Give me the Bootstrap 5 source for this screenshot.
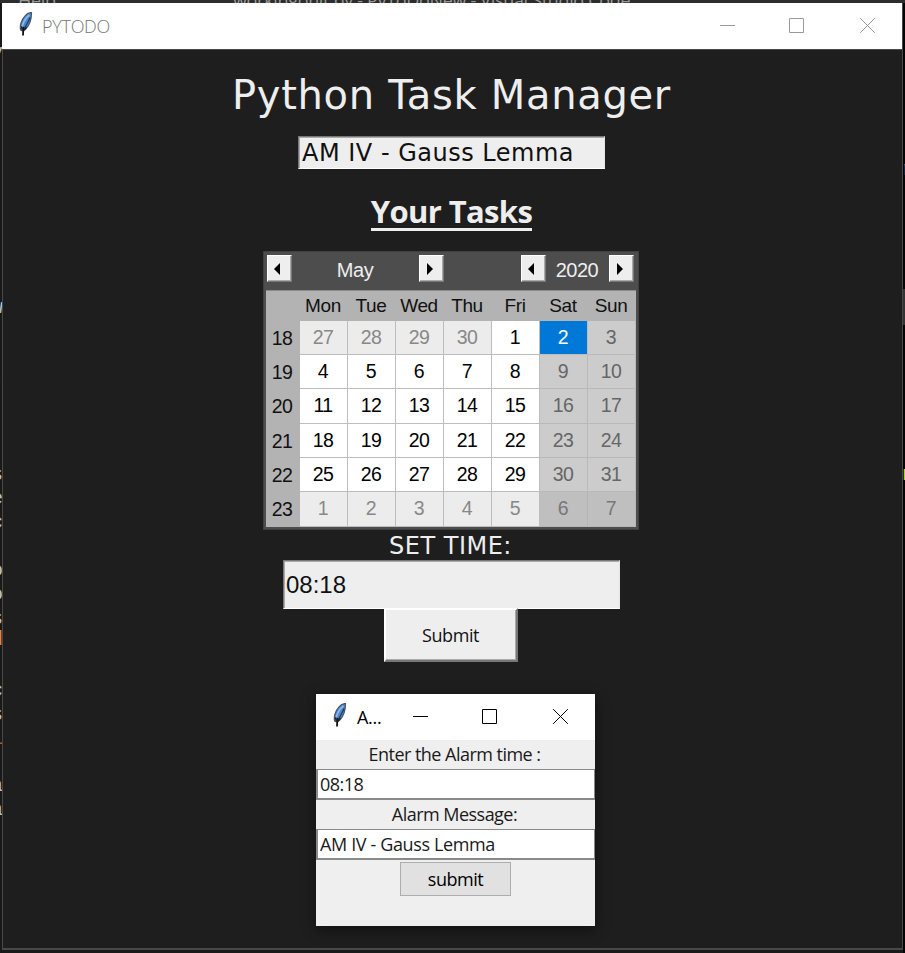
<!DOCTYPE html>
<html lang="en">
<head>
<meta charset="utf-8">
<meta name="viewport" content="width=device-width, initial-scale=1">
<title>PYTODO</title>
<link href="https://cdn.jsdelivr.net/npm/bootstrap@5.3.0/dist/css/bootstrap.min.css" rel="stylesheet">
<style>
  body { width: 905px; height: 953px; background: #1a1a1a; font-family: "Open Sans", sans-serif; color: #111; line-height: 1; }
  .desk-top { left: 0; top: 0; width: 905px; height: 3px; background: #2d2d2d; color: #999; font-size: 18px; white-space: nowrap; }
  .desk-top span { position: absolute; top: -9px; line-height: 18px; letter-spacing: -.33px; }
  .desk-left { left: 0; top: 0; width: 2px; height: 953px; background: #191919; color: #b5c4cf; font: 20px/24px "Liberation Mono", monospace; }
  .desk-left i { position: absolute; right: 0; font-style: normal; }
  .desk-right { right: 0; top: 0; width: 2px; height: 953px; background: #050505; font: 20px/24px "Liberation Mono", monospace; }
  .desk-right i { position: absolute; left: -1px; font-style: normal; }
  .desk-right .thumb-bar { left: 0; top: 289px; width: 3px; height: 36px; background: #333; }
  .main-win { margin: 3px 0 0 2px; width: 901px; height: 947px; background: #1e1e1e; border: solid #484848; border-width: 0 1px 2px; }
  .titlebar { background: #fff; width: 100%; }
  .main-bar { width: 900px; height: 46px; margin-left: -1px; padding-left: 16px; color: #999; }
  .main-bar .bar-title { font-weight: 300; letter-spacing: -.28px; color: #777; }
  .bar-line { height: 1px; background: #484848; }
  .bar-title { font-size: 18px; }
  .wctls { gap: 54px; padding: 0 27px 2px 0; }
  .wctls svg:last-child { margin-left: 2px; }
  .wctl { width: 15px; height: 15px; display: block; fill: none; stroke: currentColor; stroke-width: 1; }
  .content { padding-right: 2px; }
  h1 { font: 40px/48px "DejaVu Sans", Verdana, sans-serif; letter-spacing: .7px; color: #eee; margin: 21px 0 0; }
  .sunk { background: #eee; border: 1px solid; border-color: #777 #e4e4e4 #fff #777; box-shadow: inset 1px 1px 0 #aaa; white-space: nowrap; }
  .task-entry { width: 307px; height: 33px; margin-top: 17px; padding-left: 3px; font: 24px/33px "DejaVu Sans", Verdana, sans-serif; letter-spacing: .5px; }
  h2 { font: 700 31px/34px "Open Sans", sans-serif; letter-spacing: -.63px; color: #eee; margin: 25px 0 0; border-bottom: 3px solid #eee; height: 37px; }
  .cal { width: 376px; height: 279px; margin: 20px 2px 0 0; background: #4d4d4d; padding: 0 3px 3px; font: 19.5px/1 "Liberation Sans", Arial, sans-serif; box-shadow: inset 1px 1px #404040, inset -1px -1px #404040; }
  .cal-head { height: 39px; padding: 4px 2px 0 1px; color: #eee; }
  .cal-head .lbl { line-height: 30px; text-align: center; letter-spacing: -.5px; font-size: 20px; }
  .arrow-btn { width: 25px; height: 27px; background: #eee; border: 1px solid; border-color: #fff #777 #777 #fff; box-shadow: inset -1px -1px #aaa; padding: 0 3px 0 0; display: flex; align-items: center; justify-content: center; }
  .cal-grid { display: grid; grid-template-columns: 34px repeat(7, 48px); grid-template-rows: 29.5px repeat(6, 34.4px); background: #b3b3b3; border-top: 1px solid #8c8c8c; height: 237px; text-align: center; }
  .cal-grid > div { border: solid #bdbdbd; border-width: 0 1.5px 1.5px 0; line-height: 33px; letter-spacing: -.5px; background: #fff; color: #000; }
  .cal-grid > .hd { background: none; border: 0; line-height: 29px; color: #111; font-size: 19px; letter-spacing: -.4px; padding-right: 1px; }
  .cal-grid > .wk { background: none; border: 0; line-height: 35px; color: #111; padding-right: 1px; }
  .cal-grid > .off { background: #ececec; color: #888; }
  .cal-grid > .we { background: #ccc; color: #666; border-color: #b9b9b9; }
  .cal-grid > .weoff { background: #bfbfbf; color: #777; border-color: #b5b5b5; }
  .cal-grid > .sel { background: #0078d7; color: #fff; }
  .set-time { font: 24px/32px "DejaVu Sans", Verdana, sans-serif; letter-spacing: .5px; color: #eee; height: 30px; margin-right: 2px; }
  .time-entry { width: 337px; height: 49px; padding-left: 2px; font: 24px/48px "Liberation Sans", Arial, sans-serif; }
  .submit-main { width: 134px; height: 54px; margin: -1px 2px 0 0; background: #eee; border: 2px solid; border-color: #fff #777 #777 #fff; box-shadow: inset -1px -1px #aaa; font: 18px/48px "Open Sans", sans-serif; letter-spacing: -.42px; padding: 0; color: #111; }
  .dlg { left: 316px; top: 694px; width: 279px; height: 232px; background: #efefef; box-shadow: 0 4px 14px rgba(0,0,0,.45); font-size: 18px; letter-spacing: -.53px; color: #1a1a1a; }
  .dlg-bar { height: 46px; padding-left: 16px; color: #000; }
  .dlg-bar .bar-title { margin-left: 9px; letter-spacing: -.3px; }
  .dlg-lbl { height: 29px; line-height: 28px; text-align: center; padding-right: 2px; }
  .dlg-in { height: 31px; line-height: 28px; background: #fff; border: 2px solid #8a8a8a; border-width: 1px 1px 2px 2px; padding-left: 2px; }
  .dlg-msg { letter-spacing: -.37px; }
  .dlg-btn { width: 111px; height: 34px; margin-top: 2px; background: #e1e1e1; border: 1px solid #adadad; font: 18px/31px "Open Sans", sans-serif; letter-spacing: -.5px; padding: 0; }
</style>
<script src="https://cdn.jsdelivr.net/npm/bootstrap@5.3.0/dist/js/bootstrap.bundle.min.js"></script>
</head>
<body class="position-relative overflow-hidden m-0">
<svg width="0" height="0" class="position-absolute">
  <defs>
    <symbol id="feather" viewBox="0 0 15 24">
      <path d="M12.800 .500C8.500 1 4.500 5.500 2.500 11c-.8 2.600-1 4.800-.3 7l2.300 1 2.800-1.800c3.700-4 5.700-9.500 5.700-16.700z" fill="#4a86cc" stroke="#4b5563" stroke-width="1.200"/>
      <path d="M11 3C7.500 5.500 5 9.500 3.800 14" fill="none" stroke="#86b8f0" stroke-width="1.800"/>
      <path d="M11.500 5.500C10 10 7 14 5 18" fill="none" stroke="#223a5c" stroke-width="1.200"/>
      <path d="M4.900 15l-.4 8.500" fill="none" stroke="#111" stroke-width="1.800"/>
      <path d="M8 15l-2.500 3M2.800 14.500l1 3.500" fill="none" stroke="#1b2635" stroke-width="1.200"/>
    </symbol>
    <symbol id="min" viewBox="0 0 15 15"><path d="M0 7.500h15"/></symbol>
    <symbol id="max" viewBox="0 0 15 15"><path d="M.5.5h14v14H.5z"/></symbol>
    <symbol id="cls" viewBox="0 0 15 15"><path d="M.2.2l14.600 14.600M14.800.2L.2 14.800"/></symbol>
  </defs>
</svg>

<div class="desk-left position-absolute overflow-hidden" id="leftCode"></div>
<div class="desk-right position-absolute overflow-hidden">
  <b class="thumb-bar position-absolute"></b>
  <i style="top:158px;color:#b58a7a">r</i><i style="top:463px;color:#c8d020">n</i>
</div>
<div class="desk-top position-absolute overflow-hidden">
  <span style="left:18px">Help</span><span style="left:233px">workingonit.py - PyToDoNew - Visual Studio Code</span>
</div>

<main class="main-win position-relative">
  <div class="titlebar main-bar d-flex align-items-center">
    <svg width="16" height="24" class="mb-1"><use href="#feather"/></svg>
    <span class="bar-title ms-2">PYTODO</span>
    <div class="wctls d-flex ms-auto">
      <svg class="wctl"><use href="#min"/></svg>
      <svg class="wctl"><use href="#max"/></svg>
      <svg class="wctl"><use href="#cls"/></svg>
    </div>
  </div>
  <div class="bar-line"></div>
  <div class="content d-flex flex-column align-items-center">
    <h1>Python Task Manager</h1>
    <div class="sunk task-entry">AM IV - Gauss Lemma</div>
    <h2>Your Tasks</h2>
    <section class="cal">
      <div class="cal-head d-flex">
        <button class="arrow-btn"><svg width="7" height="12"><path d="M6 0v12L0 6z"/></svg></button>
        <span class="lbl" style="width:127px">May</span>
        <button class="arrow-btn"><svg width="7" height="12"><path d="M1 0v12l6-6z"/></svg></button>
        <button class="arrow-btn ms-auto"><svg width="7" height="12"><path d="M6 0v12L0 6z"/></svg></button>
        <span class="lbl" style="width:63px">2020</span>
        <button class="arrow-btn"><svg width="7" height="12"><path d="M1 0v12l6-6z"/></svg></button>
      </div>
      <div class="cal-grid" id="grid"></div>
    </section>
    <div class="set-time">SET TIME:</div>
    <div class="sunk time-entry">08:18</div>
    <button class="submit-main position-relative">Submit</button>
  </div>
</main>

<section class="dlg position-absolute">
  <div class="titlebar dlg-bar d-flex align-items-center">
    <svg width="16" height="24" class="mb-1"><use href="#feather"/></svg>
    <span class="bar-title">A...</span>
    <div class="wctls d-flex ms-auto">
      <svg class="wctl"><use href="#min"/></svg>
      <svg class="wctl"><use href="#max"/></svg>
      <svg class="wctl"><use href="#cls"/></svg>
    </div>
  </div>
  <div class="dlg-lbl">Enter the Alarm time :</div>
  <div class="dlg-in">08:18</div>
  <div class="dlg-lbl">Alarm Message:</div>
  <div class="dlg-in dlg-msg">AM IV - Gauss Lemma</div>
  <button class="dlg-btn d-block mx-auto">submit</button>
</section>

<script>
  const grid = document.getElementById('grid');
  const add = (text, cls) => {
    const d = document.createElement('div');
    d.textContent = text; d.className = cls; grid.append(d);
  };
  ['', 'Mon', 'Tue', 'Wed', 'Thu', 'Fri', 'Sat', 'Sun'].forEach(t => add(t, 'hd'));
  for (let w = 0; w < 6; w++) {
    add(18 + w, 'wk');
    for (let d = 0; d < 7; d++) {
      const n = w * 7 + d - 3;
      const off = n < 1 || n > 31;
      const num = n < 1 ? n + 30 : n > 31 ? n - 31 : n;
      add(num, n === 2 ? 'sel' : d > 4 ? (off ? 'weoff' : 'we') : off ? 'off' : '');
    }
  }
  // Ends of the editor's code lines at the left edge of the desktop
  [[41,'v'],[85,'('],[296,'w'],[368,')','#8a7ad0'],[463,'s'],[487,'e'],[511,'c'],[535,"'"],[559,'o'],[583,'o'],[607,'s'],[628,'d','#d08a50'],
   [679,'c'],[703,'s'],[727,'l','#b06020'],[751,'.'],[774,'a'],[798,'a']].forEach(([y, ch, col]) => {
    const i = document.createElement('i');
    i.textContent = ch; i.style.top = y + 'px'; i.style.right = '-1px';
    if (col) i.style.color = col;
    document.getElementById('leftCode').append(i);
  });
</script>
</body>
</html>
